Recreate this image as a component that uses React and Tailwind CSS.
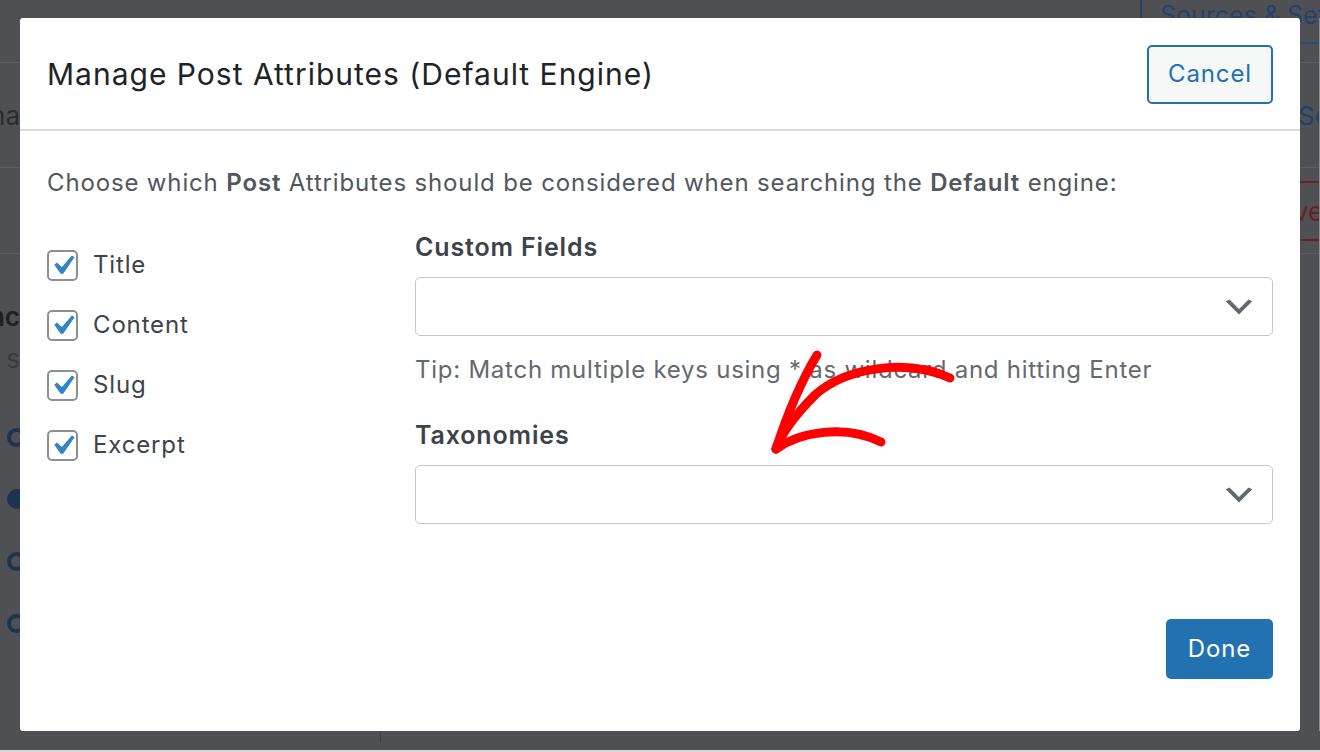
import React from "react";

function Check() {
  return (
    <span className="relative flex h-[31px] w-[31px] shrink-0 items-center justify-center rounded-[5px] border-2 border-[#8c8f94] bg-white">
      <svg viewBox="0 0 20 20" className="absolute left-[-6px] top-[-6px] h-[39px] w-[39px]">
        <path d="M14.83 4.89l1.34.94-5.81 8.38H9.02L5.78 9.67l1.34-1.25 2.57 2.4z" fill="#3582c4" />
      </svg>
    </span>
  );
}

function Select() {
  return (
    <div className="flex h-[59px] w-full items-center justify-end rounded-[5px] border border-[#c5c6c9] bg-white pr-[14px]">
      <svg viewBox="0 0 20 20" className="h-[38px] w-[38px]">
        <path d="M5 6l5 5 5-5 2 1-7 7-7-7 2-1z" fill="#646970" />
      </svg>
    </div>
  );
}

function Radio({ on }) {
  return (
    <div className="flex h-[62px] items-center pl-[7px]">
      {on ? (
        <span className="h-[20px] w-[20px] shrink-0 rounded-full bg-[#1e3350]" />
      ) : (
        <span className="h-[19px] w-[19px] shrink-0 rounded-full border-[4px] border-[#1e3350]" />
      )}
    </div>
  );
}

export default function App() {
  const items = ["Title", "Content", "Slug", "Excerpt"];
  return (
    <div
      className="relative flex h-[752px] w-[1320px] flex-col overflow-hidden bg-[#4f5054] tracking-[0.85px]"
      style={{ fontFamily: "Inter, 'Noto Sans', sans-serif" }}
    >
      {/* top strip of the page beneath the overlay */}
      <div className="flex h-[18px] shrink-0 items-start">
        <div className="w-[1140px] shrink-0" />
        <div className="h-[18px] w-[2px] shrink-0 bg-[#2b3f5c]" />
        <div className="ml-[18px] mt-[3px] whitespace-nowrap text-[25px] leading-[25px] tracking-normal text-[#26416a]">
          Sources &amp; Settings
        </div>
      </div>

      {/* middle row */}
      <div className="flex h-[713px] shrink-0">
        {/* left strip */}
        <div className="flex w-[20px] shrink-0 flex-col overflow-hidden">
          <div className="h-[45px] shrink-0 border-b border-[#5d5e62]" />
          <div className="flex h-[105px] shrink-0 items-center justify-end overflow-hidden whitespace-nowrap border-b border-[#5d5e62] text-[26px] tracking-normal text-[#2a2b2e]">
            na
          </div>
          <div className="h-[86px] shrink-0 border-b border-[#5d5e62]" />
          <div className="h-[42px] shrink-0" />
          <div className="flex h-[40px] shrink-0 items-center justify-end overflow-hidden whitespace-nowrap text-[26px] font-semibold tracking-normal text-[#1f2023]">
            nc
          </div>
          <div className="flex h-[44px] shrink-0 items-center justify-end overflow-hidden whitespace-nowrap text-[26px] tracking-normal text-[#3a3b3f]">
            s
          </div>
          <div className="h-[26px] shrink-0" />
          <Radio />
          <Radio on />
          <Radio />
          <Radio />
        </div>

        {/* modal */}
        <div className="relative z-10 flex w-[1280px] shrink-0 flex-col rounded-[3px] bg-white">
          <div className="flex h-[113px] shrink-0 items-center justify-between border-b-2 border-[#dcdcde] px-[27px] pt-[1px]">
            <h1 className="text-[30px] font-normal tracking-[1px] text-[#1d2327]">
              Manage Post Attributes (Default Engine)
            </h1>
            <button className="flex h-[59px] w-[126px] items-center justify-center rounded-[5px] border-2 border-[#2271b1] bg-[#f6f7f7] text-[24px] text-[#2271b1]">
              Cancel
            </button>
          </div>

          <div className="flex flex-1 flex-col px-[27px] pt-[34px]">
            <p className="text-[24px] leading-[36px] text-[#50575e]">
              Choose which <span className="font-semibold">Post</span> Attributes should be considered when searching the{" "}
              <span className="font-semibold">Default</span> engine:
            </p>

            <div className="mt-[28px] flex">
              <div className="flex w-[368px] shrink-0 flex-col gap-[24px] pt-[18px]">
                {items.map((t) => (
                  <label key={t} className="flex h-[36px] items-center gap-[15px]">
                    <Check />
                    <span className="text-[24px] text-[#3c434a]">{t}</span>
                  </label>
                ))}
              </div>

              <div className="flex flex-1 flex-col">
                <div className="text-[25px] font-semibold leading-[36px] text-[#3c434a]">Custom Fields</div>
                <div className="mt-[12px]">
                  <Select />
                </div>
                <div className="mt-[16px] text-[24px] leading-[36px] tracking-[0.75px] text-[#646970]">
                  Tip: Match multiple keys using * as wildcard and hitting Enter
                </div>
                <div className="mt-[29px] text-[25px] font-semibold leading-[36px] text-[#3c434a]">Taxonomies</div>
                <div className="mt-[12px]">
                  <Select />
                </div>
              </div>
            </div>

            <div className="mt-auto flex justify-end pb-[52px]">
              <button className="flex h-[60px] w-[107px] items-center justify-center rounded-[5px] bg-[#2271b1] text-[24px] text-white">
                Done
              </button>
            </div>
          </div>
        </div>

        {/* right strip */}
        <div className="flex w-[20px] shrink-0 flex-col overflow-hidden border-r border-[#8c8d90]">
          <div className="h-[24px] shrink-0" />
          <div className="h-[2px] shrink-0 bg-[#2b4a72]" />
          <div className="h-[19px] shrink-0 border-b border-[#5d5e62]" />
          <div className="flex h-[105px] shrink-0 items-center overflow-hidden whitespace-nowrap border-b border-[#5d5e62] text-[26px] tracking-normal text-[#24406a]">
            <span className="-ml-[2px]">So</span>
          </div>
          <div className="h-[13px] shrink-0" />
          <div className="h-[2px] shrink-0 bg-[#6a2126]" />
          <div className="flex h-[56px] shrink-0 items-center overflow-hidden whitespace-nowrap text-[26px] tracking-normal text-[#6a1f22]">
            <span className="-ml-[6px]">ve</span>
          </div>
          <div className="h-[2px] shrink-0 bg-[#6a2126]" />
          <div className="h-[13px] shrink-0 border-b border-[#5d5e62]" />
        </div>
      </div>

      {/* bottom strip */}
      <div className="flex h-[21px] shrink-0 items-start border-b-2 border-[#d7d8da]">
        <div className="w-[380px] shrink-0" />
        <div className="h-[11px] w-px bg-[#3f4044]" />
      </div>

      {/* annotation arrow drawn over the dialog */}
      <svg className="pointer-events-none absolute left-0 top-0 z-20 h-[752px] w-[1320px]" viewBox="0 0 1320 752">
        <g fill="none" stroke="#ff0000" strokeLinecap="round" strokeLinejoin="round">
          <path d="M950,378 C905,358 845,368 815,395 C795,415 782,432 776,449" strokeWidth="9" />
          <path d="M776,449 C786,418 800,383 817,355" strokeWidth="9" />
          <path d="M776,449 C800,432 845,424 881,442" strokeWidth="9" />
        </g>
      </svg>
    </div>
  );
}
